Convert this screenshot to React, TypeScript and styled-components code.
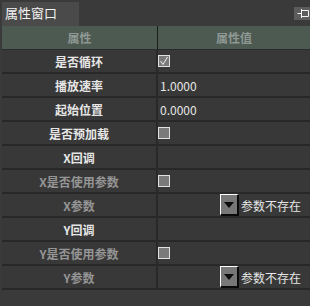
import styled, { createGlobalStyle } from 'styled-components';

const GlobalStyle = createGlobalStyle`
  body {
    margin: 0;
    background: #3a3a3a;
    font-family: "Noto Sans CJK SC", "Noto Sans", sans-serif;
    font-size: 12px;
  }
`;

type Row = {
  label: string;
  disabled?: boolean;
  kind: 'check' | 'number' | 'empty' | 'combo';
  checked?: boolean;
  value?: string;
};

const rows: Row[] = [
  { label: '是否循环', kind: 'check', checked: true },
  { label: '播放速率', kind: 'number', value: '1.0000' },
  { label: '起始位置', kind: 'number', value: '0.0000' },
  { label: '是否预加载', kind: 'check' },
  { label: 'X回调', kind: 'empty' },
  { label: 'X是否使用参数', kind: 'check', disabled: true },
  { label: 'X参数', kind: 'combo', disabled: true, value: '参数不存在' },
  { label: 'Y回调', kind: 'empty' },
  { label: 'Y是否使用参数', kind: 'check', disabled: true },
  { label: 'Y参数', kind: 'combo', disabled: true, value: '参数不存在' },
];

const App = () => {
  return (
    <>
      <GlobalStyle />
      <Window>
        <TitleBar>
          <Tab>属性窗口</Tab>
          <PinButton>
            <svg width="13" height="11" viewBox="0 0 13 11">
              <path d="M0.5 5.5h4M4.5 1v9M4.5 2.5h7v6h-7" stroke="#f2f2f2" strokeWidth="1" fill="none" />
            </svg>
          </PinButton>
        </TitleBar>
        <Grid>
          <HeadCell>属性</HeadCell>
          <HeadCell $last>属性值</HeadCell>
          {rows.map((r, i) => (
            <Fragment key={i} row={r} />
          ))}
        </Grid>
      </Window>
    </>
  );
};

const Fragment = ({ row }: { row: Row }) => (
  <>
    <LabelCell $disabled={row.disabled}>{row.label}</LabelCell>
    <ValueCell $right={row.kind === 'combo'}>
      {row.kind === 'check' && (
        <CheckBox>
          {row.checked && (
            <svg width="10" height="10" viewBox="0 0 10 10">
              <path d="M1.5 5l2.5 3.5L8.5 1" stroke="#f0f0f0" strokeWidth="1" fill="none" />
            </svg>
          )}
        </CheckBox>
      )}
      {row.kind === 'number' && <NumberText>{row.value}</NumberText>}
      {row.kind === 'combo' && (
        <>
          <DropButton>
            <svg width="10" height="6" viewBox="0 0 10 6">
              <path d="M0 0h10L5 6z" fill="#0c0c0c" />
            </svg>
          </DropButton>
          <ComboText>{row.value}</ComboText>
        </>
      )}
    </ValueCell>
  </>
);

const Window = styled.div`
  width: 310px;
  height: 306px;
  padding-left: 2px;
  box-sizing: border-box;
  background: #3a3a3a;
  overflow: hidden;
`;

const TitleBar = styled.div`
  height: 26px;
  display: flex;
  align-items: flex-end;
  justify-content: space-between;
`;

const Tab = styled.div`
  width: 77px;
  height: 24px;
  background: #4a4a4a;
  color: #f2f2f2;
  font-size: 13px;
  line-height: 22px;
  padding-left: 3px;
  box-sizing: border-box;
`;

const PinButton = styled.div`
  align-self: flex-start;
  margin-top: 7px;
  width: 16px;
  height: 13px;
  background: #5c5c5c;
  display: flex;
  align-items: center;
  justify-content: flex-end;
`;

const Grid = styled.div`
  display: grid;
  grid-template-columns: 156px 1fr;
`;

const HeadCell = styled.div<{ $last?: boolean }>`
  height: 24px;
  background: #4d5a52;
  color: #8f9893;
  font-weight: bold;
  display: flex;
  align-items: center;
  justify-content: center;
  box-sizing: border-box;
  border-right: ${(p) => (p.$last ? 'none' : '1px solid #1e1e1e')};
  border-bottom: 1px solid #2a2a2a;
`;

const LabelCell = styled.div<{ $disabled?: boolean }>`
  height: 24px;
  box-sizing: border-box;
  display: flex;
  align-items: center;
  justify-content: center;
  background: #383838;
  border-right: 2px solid #292929;
  border-bottom: 2px solid #282828;
  color: ${(p) => (p.$disabled ? '#959595' : '#e6e6e6')};
  font-weight: bold;
`;

const ValueCell = styled.div<{ $right?: boolean }>`
  height: 24px;
  box-sizing: border-box;
  display: flex;
  align-items: center;
  justify-content: ${(p) => (p.$right ? 'flex-end' : 'flex-start')};
  padding-right: ${(p) => (p.$right ? '9px' : '0')};
  background: #383838;
  border-bottom: 2px solid #282828;
`;

const CheckBox = styled.div`
  width: 12px;
  height: 12px;
  box-sizing: border-box;
  border: 1px solid #e2e2e2;
  background: #7a7a7a;
  display: flex;
  align-items: center;
  justify-content: center;
`;

const NumberText = styled.span`
  color: #e6e6e6;
  padding-left: 2px;
`;

const DropButton = styled.div`
  width: 19px;
  height: 22px;
  align-self: flex-start;
  box-sizing: border-box;
  background: #777;
  border-top: 1px solid #fff;
  border-left: 1px solid #fff;
  border-right: 2px solid #0a0a0a;
  border-bottom: 2px solid #0a0a0a;
  display: flex;
  align-items: center;
  justify-content: center;
`;

const ComboText = styled.span`
  color: #e6e6e6;
  margin-left: 2px;
`;

export default App;
